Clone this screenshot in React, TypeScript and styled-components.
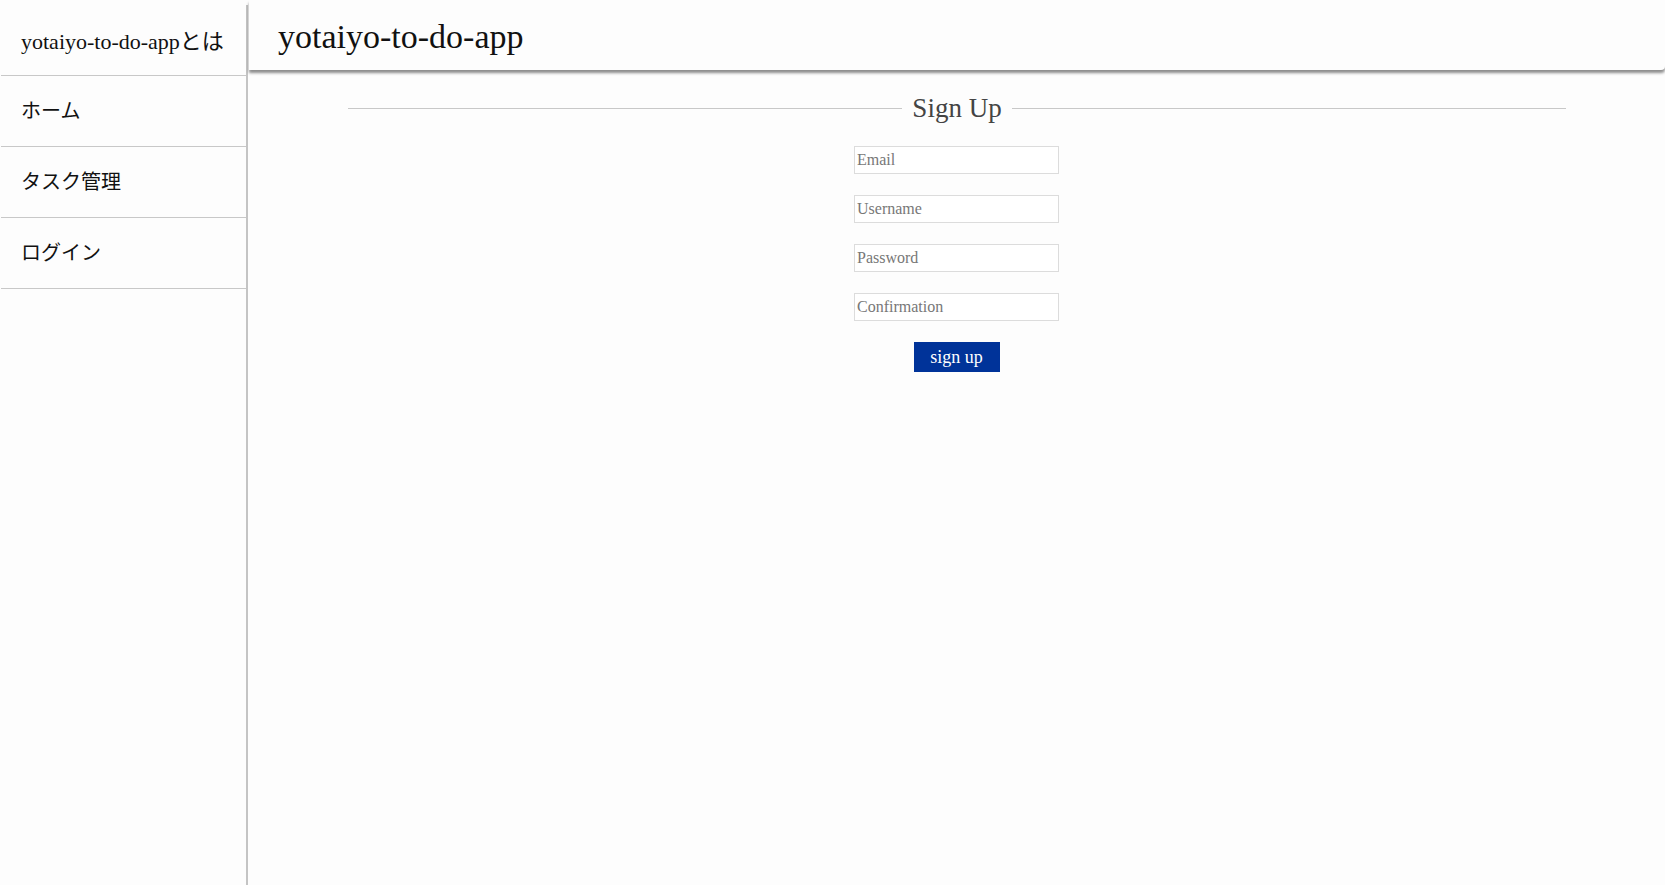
import React from "react";
import styled, { createGlobalStyle } from "styled-components";

const GlobalStyle = createGlobalStyle`
  html, body {
    margin: 0;
    padding: 0;
    background: #fdfdfd;
  }
  body {
    font-family: "Liberation Serif", "Noto Sans CJK JP", serif;
    color: #111;
  }
  * { box-sizing: border-box; }
`;

const Layout = styled.div`
  display: flex;
  min-height: 885px;
`;

const Sidebar = styled.nav`
  width: 248px;
  flex-shrink: 0;
  margin-top: 5px;
  padding-left: 1px;
  border-right: 2px solid #c4c4c4;
`;

const NavList = styled.ul`
  list-style: none;
  margin: 0;
  padding: 0;
`;

const NavItem = styled.li<{ $size: number }>`
  height: 71px;
  display: flex;
  align-items: center;
  padding: 0 0 3px 20px;
  border-bottom: 1px solid #c8c8c8;
  font-size: ${(p) => p.$size}px;
  color: #111;
  white-space: nowrap;
  cursor: pointer;
`;

const Main = styled.main`
  flex: 1;
  margin-left: 1px;
  display: flex;
  flex-direction: column;
`;

const Header = styled.header`
  height: 70px;
  padding: 18px 0 0 29px;
  box-shadow: 0 3px 3px rgba(0, 0, 0, 0.45);
  border-bottom-right-radius: 4px;
  font-size: 34px;
  color: #111;
`;

const Content = styled.section`
  display: flex;
  flex-direction: column;
  align-items: center;
  padding-top: 23px;
`;

const Title = styled.h2`
  width: 86%;
  margin: 0 0 22px;
  display: flex;
  align-items: center;
  gap: 10px;
  font-weight: normal;
  font-size: 27px;
  color: #444;

  &::before,
  &::after {
    content: "";
    flex: 1;
    height: 1px;
    background: #c8c8c8;
  }
`;

const Form = styled.form`
  display: flex;
  flex-direction: column;
  align-items: center;
  gap: 21px;
  padding-right: 1px;
`;

const Input = styled.input`
  width: 205px;
  height: 28px;
  padding: 0 2px;
  border: 1px solid #dcdcdc;
  background: #fff;
  font-family: "Liberation Serif", serif;
  font-size: 16px;
  color: #222;
  outline: none;

  &::placeholder {
    color: #777;
  }
`;

const SubmitButton = styled.button`
  width: 86px;
  height: 30px;
  border: none;
  background: #003399;
  color: #fff;
  font-family: "Liberation Serif", serif;
  font-size: 18px;
  cursor: pointer;
  padding: 0;
`;

const navItems = [
  { label: "yotaiyo-to-do-appとは", size: 22 },
  { label: "ホーム", size: 20 },
  { label: "タスク管理", size: 20 },
  { label: "ログイン", size: 20 },
];

export default function App() {
  return (
    <>
      <GlobalStyle />
      <Layout>
        <Sidebar>
          <NavList>
            {navItems.map((item) => (
              <NavItem key={item.label} $size={item.size}>
                {item.label}
              </NavItem>
            ))}
          </NavList>
        </Sidebar>
        <Main>
          <Header>yotaiyo-to-do-app</Header>
          <Content>
            <Title>Sign Up</Title>
            <Form onSubmit={(e) => e.preventDefault()}>
              <Input type="email" placeholder="Email" />
              <Input type="text" placeholder="Username" />
              <Input type="password" placeholder="Password" />
              <Input type="password" placeholder="Confirmation" />
              <SubmitButton type="submit">sign up</SubmitButton>
            </Form>
          </Content>
        </Main>
      </Layout>
    </>
  );
}
